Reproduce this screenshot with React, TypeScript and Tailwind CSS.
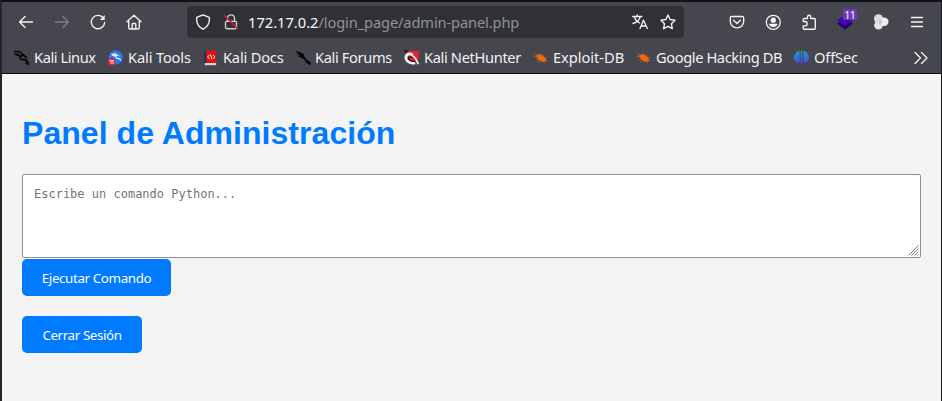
import type { ReactNode } from "react";

type IconProps = { children: ReactNode; className?: string };

function Icon({ children, className = "" }: IconProps) {
  return (
    <svg
      viewBox="0 0 16 16"
      className={`h-4 w-4 shrink-0 overflow-visible ${className}`}
      fill="none"
      stroke="currentColor"
      strokeWidth="1.35"
      strokeLinecap="round"
      strokeLinejoin="round"
    >
      {children}
    </svg>
  );
}

function ToolButton({ children, label }: { children: ReactNode; label: string }) {
  return (
    <button aria-label={label} className="relative flex h-8 w-9 shrink-0 items-center justify-center">
      {children}
    </button>
  );
}

const bug = (
  <g stroke="#f0670f" fill="#f0670f" strokeWidth="0.5">
    <path d="M3.500 5.200 6.500 4.600 9.500 5.600 12.300 8 13 10.500 11 11.700 7.800 11 4.700 8.500Z" />
    <path d="M4 5 1.500 3.500M5 6.800 1 6.500M6 9 3 10M8 11 4.500 12M8 5 7 3.300M10 6 11 4.500M12 8 13.500 7.500M11 11.500l.5 1.500M13 10.500l1.500.5" />
  </g>
);

const dragon = (
  <g stroke="#050607">
    <path d="M.5 1.200 6 2 9.500 5 6.500 6.300 2.500 4.800M1 4l3 .5 2.500 2" strokeWidth="1.500" />
    <path d="M6.500 6.500c-1.500 2 .2 3.300 3 3.200 3.200 0 4.500 1.700 5 4.600M8.500 4.500l4 3M13 11l-1 2.500" strokeWidth="1.700" />
  </g>
);

const bookmarks: { label: string; width: string; tracking: string; icon: ReactNode }[] = [
  { label: "Kali Linux", width: "w-[94px]", tracking: "tracking-[-0.44px]", icon: dragon },
  {
    label: "Kali Tools",
    width: "w-[95px]",
    tracking: "tracking-[-0.15px]",
    icon: (
      <g stroke="none">
        <circle cx="7.700" cy="7.500" r="7.200" fill="#2777f5" />
        <path d="M3 4.300Q7 2.500 9 4.200l3.500 2.300-3.500-.8-1 .8 2 1.300 2.500.8 1 3-2-1.800-3-1-1.500-2L4 5.500Z" fill="#e5edf7" />
        <circle cx="3.600" cy="11.800" r="3.700" fill="#e8202b" />
        <path d="M2 10.500h1.100v3M4 10.500h1.100v3" fill="none" stroke="#fff" strokeWidth=".9" />
      </g>
    ),
  },
  {
    label: "Kali Docs",
    width: "w-[92px]",
    tracking: "tracking-[-0.2px]",
    icon: (
      <g stroke="none">
        <path d="M1.500 1h2v12h-2z" fill="#1c2468" />
        <path d="M3.200.5H13.200v12.500H3.200z" fill="#df1216" />
        <path d="M1.800 13h11.400v2.200H1.800z" fill="#d9d4cd" />
        <path d="m6.300 5.200-1.800 1.700 1.800 1.700M10.200 5.200 12 6.900l-1.800 1.700M7.600 5l1.300 3.800" stroke="#fff" fill="none" strokeWidth=".9" />
      </g>
    ),
  },
  {
    label: "Kali Forums",
    width: "w-[109px]",
    tracking: "tracking-[-0.36px]",
    icon: (
      <path
        d="M0 .5 4.500 2 9 4.300 9.500 6.700 12 10l2.500 1.500 1.500 1.500-1 2-3-1.500-2-3L7 8 3.500 6.500 4.500 5 1 3.500 3 3.500Z"
        fill="#050607"
        stroke="none"
      />
    ),
  },
  {
    label: "Kali NetHunter",
    width: "w-[129px]",
    tracking: "tracking-[-0.36px]",
    icon: (
      <g stroke="none">
        <path d="M1 1 15.500 1 13.500 14 6 9Z" fill="#e9232e" />
        <path d="M0 .5h5L2 3z" fill="#111" />
        <path d="M8.500 5C5 2.500 1.300 4.800 2 8.500c.8 3.500 5 5.300 9.200 4.300" stroke="#f2f2f2" fill="none" strokeWidth="2.800" strokeLinecap="butt" />
        <path d="M8 5.500Q11.500 7 14 13.500" stroke="#f2f2f2" fill="none" strokeWidth="1.800" />
        <path d="M8.500 7.500Q5 6 4.500 8.300q0 2.700 6 3.200" stroke="#17171b" fill="none" strokeWidth="1.300" />
      </g>
    ),
  },
  { label: "Exploit-DB", width: "w-[103px]", tracking: "tracking-[-0.04px]", icon: bug },
  { label: "Google Hacking DB", width: "w-[158px]", tracking: "tracking-[-0.41px]", icon: bug },
  {
    label: "OffSec",
    width: "w-[70px]",
    tracking: "tracking-[-0.15px]",
    icon: (
      <g stroke="none" fill="url(#offsec)">
        <defs>
          <linearGradient id="offsec" x1="0" y1="0" x2="0" y2="16" gradientUnits="userSpaceOnUse">
            <stop stopColor="#15a9be" />
            <stop offset=".55" stopColor="#3569dd" />
            <stop offset="1" stopColor="#6a25e0" />
          </linearGradient>
        </defs>
        <path d="M5.600.8V12.500Q4.500 12.200 2.800 13-1.800 9 1 4 2.700 1.300 5.600.8ZM9.400.8V12.500Q10.500 12.200 12.200 13 16.800 9 14 4 12.300 1.300 9.400.8ZM6.700.8h1.600v14.500H6.700z" />
      </g>
    ),
  },
];

function Toolbar() {
  return (
    <nav className="flex h-10 items-center pl-1.5 text-[#f5f5f6]">
      <ToolButton label="Atrás">
        <Icon><path d="M14.500 8H1.700M7 2.600 1.600 8 7 13.400" /></Icon>
      </ToolButton>
      <ToolButton label="Adelante">
        <Icon className="text-[#7d7e84]"><path d="M1.500 8h12.800M9 2.600 14.400 8 9 13.400" /></Icon>
      </ToolButton>
      <ToolButton label="Recargar">
        <Icon>
          <path d="M13.500 4.200A6.700 6.700 0 1 0 14.700 8.500" />
          <path d="M14.700 1v5H9.800z" fill="currentColor" stroke="none" />
        </Icon>
      </ToolButton>
      <ToolButton label="Inicio">
        <Icon>
          <path d="M1 7.700 8 1.200l7 6.500M2.700 7v6.500q0 1.500 1.500 1.500h7.600q1.500 0 1.500-1.500V7M6.200 15v-4.700q0-.8.8-.8h2q.8 0 .8.800V15" />
        </Icon>
      </ToolButton>
      <div className="ml-[35px] flex h-8 w-[497px] shrink-0 items-center rounded bg-[#303136] pl-2 pr-2">
        <Icon><path d="M8 .8 14.300 3.400V6.500Q14 12 8 15.200 2 12 1.700 6.500V3.400Z" /></Icon>
        <Icon className="ml-3">
          <path d="M4.500 7V4.300a3.500 3.500 0 0 1 7 0V7M3.500 7.300h9q1 0 1 1v5q0 1.400-1.400 1.400H3.900q-1.400 0-1.400-1.400v-5q0-1 1-1Z" stroke="#d2d2d4" />
          <path d="m1.500 1.500 13 13" stroke="#f50b43" strokeWidth="1.500" />
        </Icon>
        <span className="ml-[9px] grow whitespace-nowrap text-[14.67px] leading-5 tracking-[-0.13px] text-[#919196]">
          <span className="tracking-normal text-[#f7f7f8]">172.17.0.2</span>/login_page/admin-panel.php
        </span>
        <Icon>
          <path d="M.8 2.500h9M5.200.8v1.700M8.300 2.700C7.500 6 4.500 8.500 1 9.500M2.500 3.500C3.500 6 5.500 8 7.500 9M8 14.500l3.500-8.300 3.800 8.300M9.200 12h5" />
        </Icon>
        <Icon className="ml-3">
          <path d="m8 1 2.100 4.500 4.900.7-3.600 3.500.9 5L8 12.300l-4.400 2.400.9-5L1 6.200l4.900-.7Z" />
        </Icon>
      </div>
      <div className="ml-[35px] flex">
        <ToolButton label="Pocket">
          <Icon><path d="M2.700 2.500h10.600q1.400 0 1.400 1.400v3.300a6.700 6.700 0 0 1-13.400 0V3.900q0-1.400 1.400-1.400ZM4.600 6.300 8 9.500l3.400-3.200" /></Icon>
        </ToolButton>
        <ToolButton label="Cuenta">
          <Icon>
            <circle cx="8.300" cy="8.300" r="7" />
            <circle cx="8.300" cy="6.200" r="2.600" fill="currentColor" stroke="none" />
            <path d="M3.900 9.800h8.800Q11.800 13 8.300 13T3.900 9.800Z" fill="currentColor" stroke="none" />
          </Icon>
        </ToolButton>
        <ToolButton label="Extensiones">
          <Icon>
            <path d="M2.200 7.500V5.500q0-1 1-1h3.300V2.800a1.600 1.600 0 0 1 3.200 0v1.700h3.600q1 0 1 1v8.700q0 1-1 1H3.200q-1 0-1-1v-2.300h1.700a2.200 2.200 0 0 0 0-4.400Z" />
          </Icon>
        </ToolButton>
        <ToolButton label="Wappalyzer">
          <Icon>
            <g stroke="none">
              <path d="M0 9.500 8 4l8 5.500-8 6.300Z" fill="#23006c" />
              <path d="M0 6.300 8 1l8 5.300-8 5.500Z" fill="#4a00b3" />
            </g>
          </Icon>
          <span className="absolute left-4 top-[3px] flex h-[11px] w-[14px] items-center justify-center rounded-[2px] bg-[#713abb] text-[10px] leading-none tracking-[-0.3px] text-white">11</span>
        </ToolButton>
        <ToolButton label="Contenedores">
          <Icon>
            <g stroke="none">
              <circle cx="5.500" cy="4.800" r="4.500" fill="#dededf" />
              <circle cx="5.500" cy="11.200" r="4.300" fill="#e6e6e7" />
              <circle cx="11.300" cy="7.700" r="4.200" fill="#f0f0f0" />
              <path d="M7 4.500 10 8l-3 3.300Q4 8 7 4.500Z" fill="#c9c9ca" />
            </g>
          </Icon>
        </ToolButton>
        <ToolButton label="Menú">
          <Icon><path d="M2.500 3.500h11M2.500 8h11M2.500 12.500h11" /></Icon>
        </ToolButton>
      </div>
    </nav>
  );
}

export default function App() {
  return (
    <div className="h-[401px] w-[942px] overflow-hidden border-l-2 border-r border-t-2 border-l-[#24252d] border-r-[#15171e] border-t-[#111216] bg-[#f4f4f4] [font-family:'Noto_Sans',sans-serif]">
      <header className="h-[72px] border-b border-[#0c0c0f] bg-[#45464e]">
        <Toolbar />
        <div className="flex h-8 items-center pl-3 text-[14.67px] text-[#f2f2f3]">
          {bookmarks.map((b) => (
            <a key={b.label} className={`flex h-6 shrink-0 items-center gap-1 whitespace-nowrap ${b.width}`}>
              <Icon>{b.icon}</Icon>
              <span className={`pb-[3px] leading-5 ${b.tracking}`}>{b.label}</span>
            </a>
          ))}
          <Icon className="ml-[49px]"><path d="m2 2.500 5.500 5.500L2 13.500M8.500 2.500 14 8l-5.500 5.500" /></Icon>
        </div>
      </header>
      <main className="flex flex-col items-start px-5 pt-[41px]">
        <h1 className="text-[32px] font-bold leading-[37px] tracking-[0.05px] text-[#007bff] [font-family:'Liberation_Sans',sans-serif]">
          Panel de Administración
        </h1>
        <div className="relative mt-[22px] h-[84px] w-[899px]">
          <textarea
            placeholder="Escribe un comando Python..."
            className="block h-full w-full resize-none rounded-[2px] border border-[#8f8f9d] bg-white px-[11px] pb-[10px] pt-3 text-[12px] leading-[15px] placeholder:text-[#757575] [font-family:'DejaVu_Sans_Mono',monospace]"
          />
          <svg viewBox="0 0 11 11" className="absolute bottom-[2px] right-[2px] h-[11px] w-[11px]" stroke="#777" strokeWidth="1">
            <path d="M.5 10.500l10-10M3.500 10.500l7-7M6.500 10.500l4-4M9.500 10.500l1-1" />
          </svg>
        </div>
        <button className="mt-px h-[37px] w-[149px] rounded-[5px] bg-[#007bff] pt-[2px] text-[13.333px] tracking-[-0.36px] text-white">
          Ejecutar Comando
        </button>
        <button className="mt-5 h-[37px] w-[120px] rounded-[5px] bg-[#007bff] pt-[2px] text-[13.333px] tracking-[-0.38px] text-white">
          Cerrar Sesión
        </button>
      </main>
    </div>
  );
}
